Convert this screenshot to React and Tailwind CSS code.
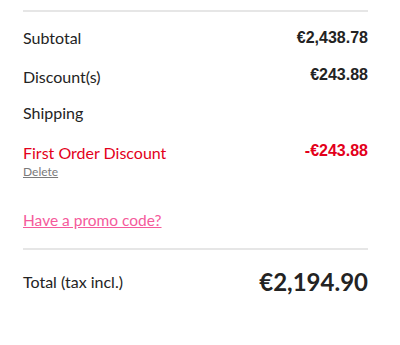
export default function App() {
  const lato = { fontFamily: "Lato, 'Noto Sans', sans-serif" };
  return (
    <div className="w-[400px] h-[345px] bg-white">
      <div className="ml-[23px] w-[345px] pt-[10px] text-[#232323]" style={lato}>
        <div className="h-[2px] bg-[#e6e6e6]" />
        <div className="mt-[16px] flex items-center justify-between h-[20px]">
          <span className="text-[16px] leading-[20px]">Subtotal</span>
          <span className="font-['Liberation_Sans',Arial,sans-serif] font-bold text-[16px] leading-[20px]">€2,438.78</span>
        </div>
        <div className="mt-[19px] flex items-start justify-between">
          <span className="text-[16px] leading-[20px]">Discount(s)</span>
          <span className="font-['Liberation_Sans',Arial,sans-serif] font-bold text-[16px] leading-[16px]">€243.88</span>
        </div>
        <div className="mt-[16px] flex items-start justify-between">
          <span className="text-[16px] leading-[20px]">Shipping</span>
        </div>
        <div className="mt-[20px] flex items-start justify-between">
          <span className="text-[16px] leading-[20px] text-[#e3001b]">First Order Discount</span>
          <span className="font-['Liberation_Sans',Arial,sans-serif] font-bold text-[16px] leading-[16px] text-[#e3001b]">-€243.88</span>
        </div>
        <div className="mt-[2px] flex">
          <a className="block text-[12px] leading-[14px] text-[#7a7a7a] underline">Delete</a>
        </div>
        <div className="mt-[31px] flex">
          <a className="block text-[15.5px] leading-[20px] text-[#f55a9b] underline">Have a promo code?</a>
        </div>
        <div className="mt-[18px] h-[2px] bg-[#e6e6e6]" />
        <div className="mt-[17px] flex items-center justify-between h-[30px]">
          <span className="text-[16px] leading-[20px]">Total (tax incl.)</span>
          <span className="font-bold text-[24px] leading-[30px]">€2,194.90</span>
        </div>
      </div>
    </div>
  );
}
